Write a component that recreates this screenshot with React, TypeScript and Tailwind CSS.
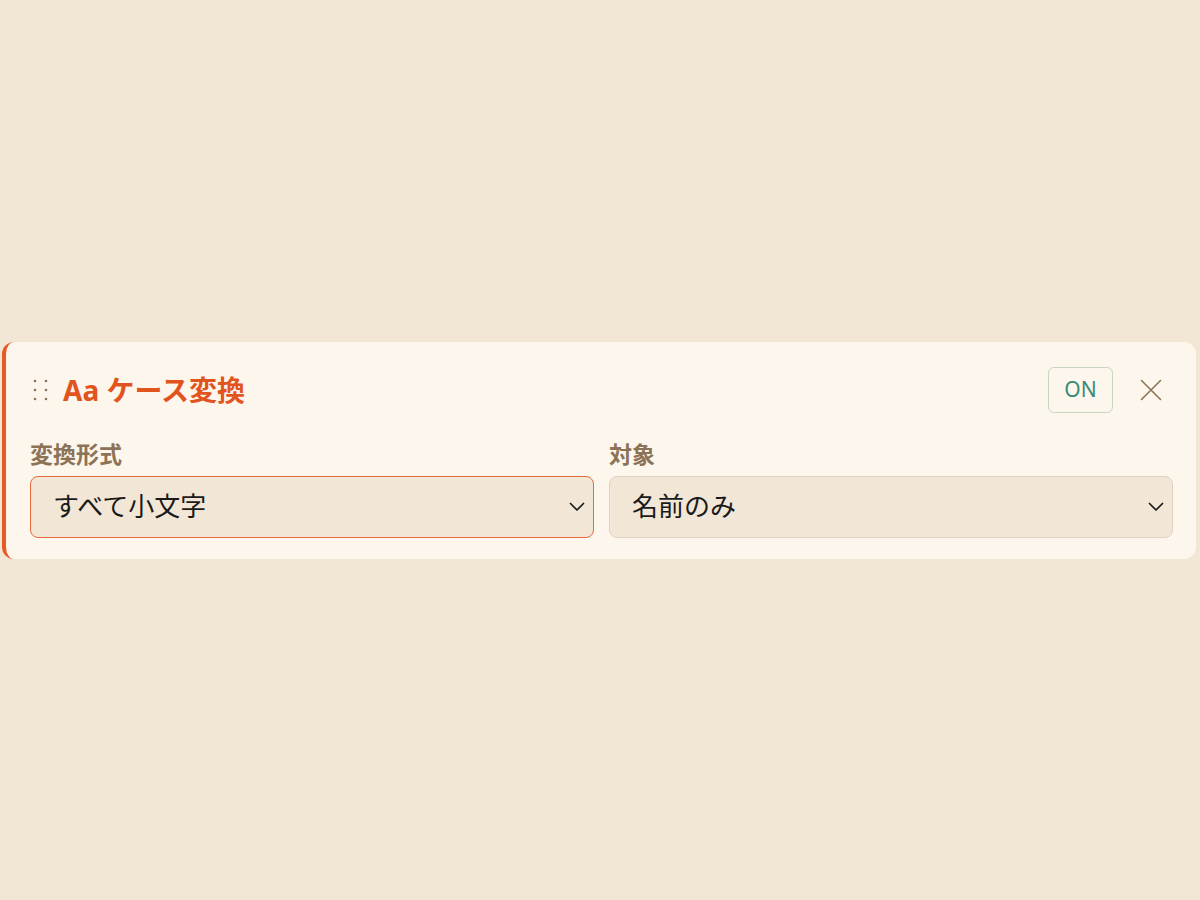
import * as React from 'react';

const FONT = '"Noto Sans", "Noto Sans CJK JP", sans-serif';

const Chevron = () => (
    <svg width="16" height="16" viewBox="0 0 16 16" fill="none" className="absolute right-[8px] top-1/2 -translate-y-1/2 pointer-events-none">
        <path d="M1.5 4.5L8 11l6.5-6.5" stroke="#1a1a1a" strokeWidth="1.7" strokeLinecap="round" strokeLinejoin="round" />
    </svg>
);

const Field = ({ label, value, active }: { label: string; value: string; active?: boolean }) => (
    <div className="flex-1 flex flex-col gap-[7px]">
        <label className="text-[23px] leading-[30px] font-bold text-[#8c7356]">{label}</label>
        <div
            className={`relative h-[62px] rounded-[8px] bg-[#f2e6d6] border flex items-center pl-[22px] ${
                active ? 'border-[#e8693e]' : 'border-[#dfd2c0]'
            }`}
        >
            <span className="text-[26px] text-[#1a1a1a]">{value}</span>
            <Chevron />
        </div>
    </div>
);

const App = () => {
    return (
        <div className="min-h-[900px] w-full bg-[#f2e6d5] flex items-center" style={{ fontFamily: FONT }}>
            <div className="ml-[2px] w-[1194px] bg-[#fdf6ec] rounded-[12px] border-l-[4px] border-[#e85a24] pl-[24px] pr-[23px] pt-[25px] pb-[21px] flex flex-col gap-[26px]">
                <div className="flex items-center h-[46px]">
                    <svg width="20" height="24" viewBox="0 0 20 24" className="ml-[2px] mr-[11px]">
                        {[3, 12, 21].map((y) =>
                            [3, 14].map((x) => <circle key={`${x}-${y}`} cx={x} cy={y} r="1.3" fill="#8c7356" />)
                        )}
                    </svg>
                    <h2 className="text-[28px] font-bold text-[#e2541d] leading-none">Aa ケース変換</h2>
                    <div className="ml-auto flex items-center gap-[25px]">
                        <button className="h-[46px] w-[65px] rounded-[6px] border border-[#c8d6c2] text-[21px] text-[#3a8a78] flex items-center justify-center">
                            ON
                        </button>
                        <svg width="26" height="26" viewBox="0 0 26 26" fill="none" className="mr-[9px]">
                            <path d="M3.5 3.5l19 19M22.5 3.5l-19 19" stroke="#8c7356" strokeWidth="1.6" strokeLinecap="round" />
                        </svg>
                    </div>
                </div>
                <div className="flex gap-[15px]">
                    <Field label="変換形式" value="すべて小文字" active />
                    <Field label="対象" value="名前のみ" />
                </div>
            </div>
        </div>
    );
};

export default App;
